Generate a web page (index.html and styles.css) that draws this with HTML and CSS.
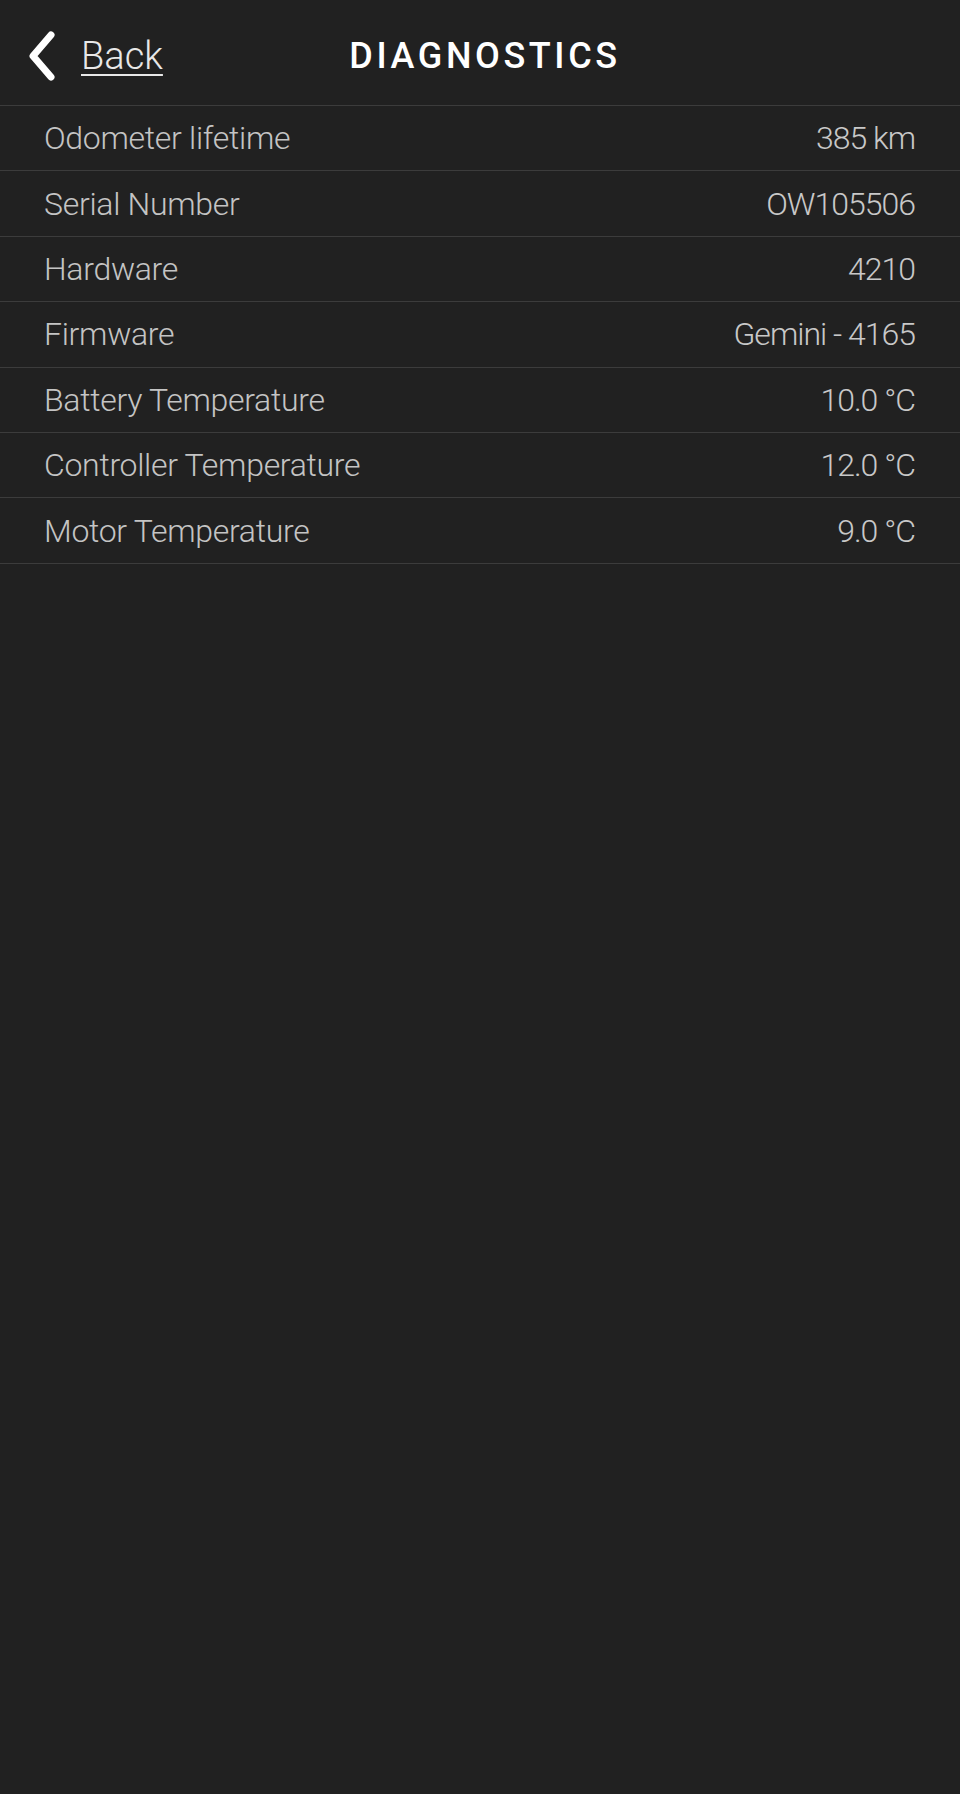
FILE: index.html
```html
<!DOCTYPE html>
<html lang="en">
<head>
  <meta charset="UTF-8">
  <title>Diagnostics</title>
  <link rel="stylesheet" href="styles.css">
</head>
<body>
  <header class="topbar">
    <a class="back" href="#">
      <svg class="chevron" width="32" height="52" viewBox="0 0 32 52">
        <path d="M25 5 L7 26 L25 47" fill="none" stroke="#fff" stroke-width="7" stroke-linecap="round" stroke-linejoin="round"/>
      </svg>
      <span class="back-label">Back</span>
    </a>
    <h1>DIAGNOSTICS</h1>
  </header>

  <ul class="diag-list">
    <li><span class="label">Odometer lifetime</span><span class="value">385 km</span></li>
    <li><span class="label">Serial Number</span><span class="value">OW105506</span></li>
    <li><span class="label">Hardware</span><span class="value">4210</span></li>
    <li><span class="label">Firmware</span><span class="value">Gemini - 4165</span></li>
    <li><span class="label">Battery Temperature</span><span class="value">10.0 °C</span></li>
    <li><span class="label">Controller Temperature</span><span class="value">12.0 °C</span></li>
    <li><span class="label">Motor Temperature</span><span class="value">9.0 °C</span></li>
  </ul>
</body>
</html>
```

FILE: styles.css
```css
:root {
  --background: #212121;
  --divider: #3c3c3c;
  --text: #c4c4c4;
}

body {
  margin: 0;
  background-color: var(--background);
  font-family: Roboto, 'Liberation Sans', sans-serif;
  color: var(--text);
  min-height: 1794px;
}

.topbar {
  position: relative;
  height: 105px;
  border-bottom: 1px solid var(--divider);
  display: flex;
  align-items: center;
  justify-content: center;
}

.back {
  position: absolute;
  left: 26px;
  top: 30px;
  display: flex;
  align-items: center;
  gap: 23px;
  color: #e8e8e8;
  text-decoration: none;
}

.back-label {
  font-size: 38px;
  font-weight: 300;
  text-decoration: underline;
  text-underline-offset: 5px;
  text-decoration-thickness: 2px;
}

.topbar h1 {
  margin: 6px 0 0 10px;
  font-size: 36px;
  font-weight: 500;
  letter-spacing: 3.6px;
  color: #fff;
}

.diag-list {
  list-style: none;
  margin: 0;
  padding: 0;
}

.diag-list li {
  height: 64.4px;
  display: flex;
  align-items: center;
  justify-content: space-between;
  padding: 0 45px 0 44px;
  border-bottom: 1px solid var(--divider);
  font-size: 32px;
  font-weight: 300;
}

.label {
  letter-spacing: -0.3px;
}

.value {
  color: #c8c8c8;
  letter-spacing: -1px;
}
```
